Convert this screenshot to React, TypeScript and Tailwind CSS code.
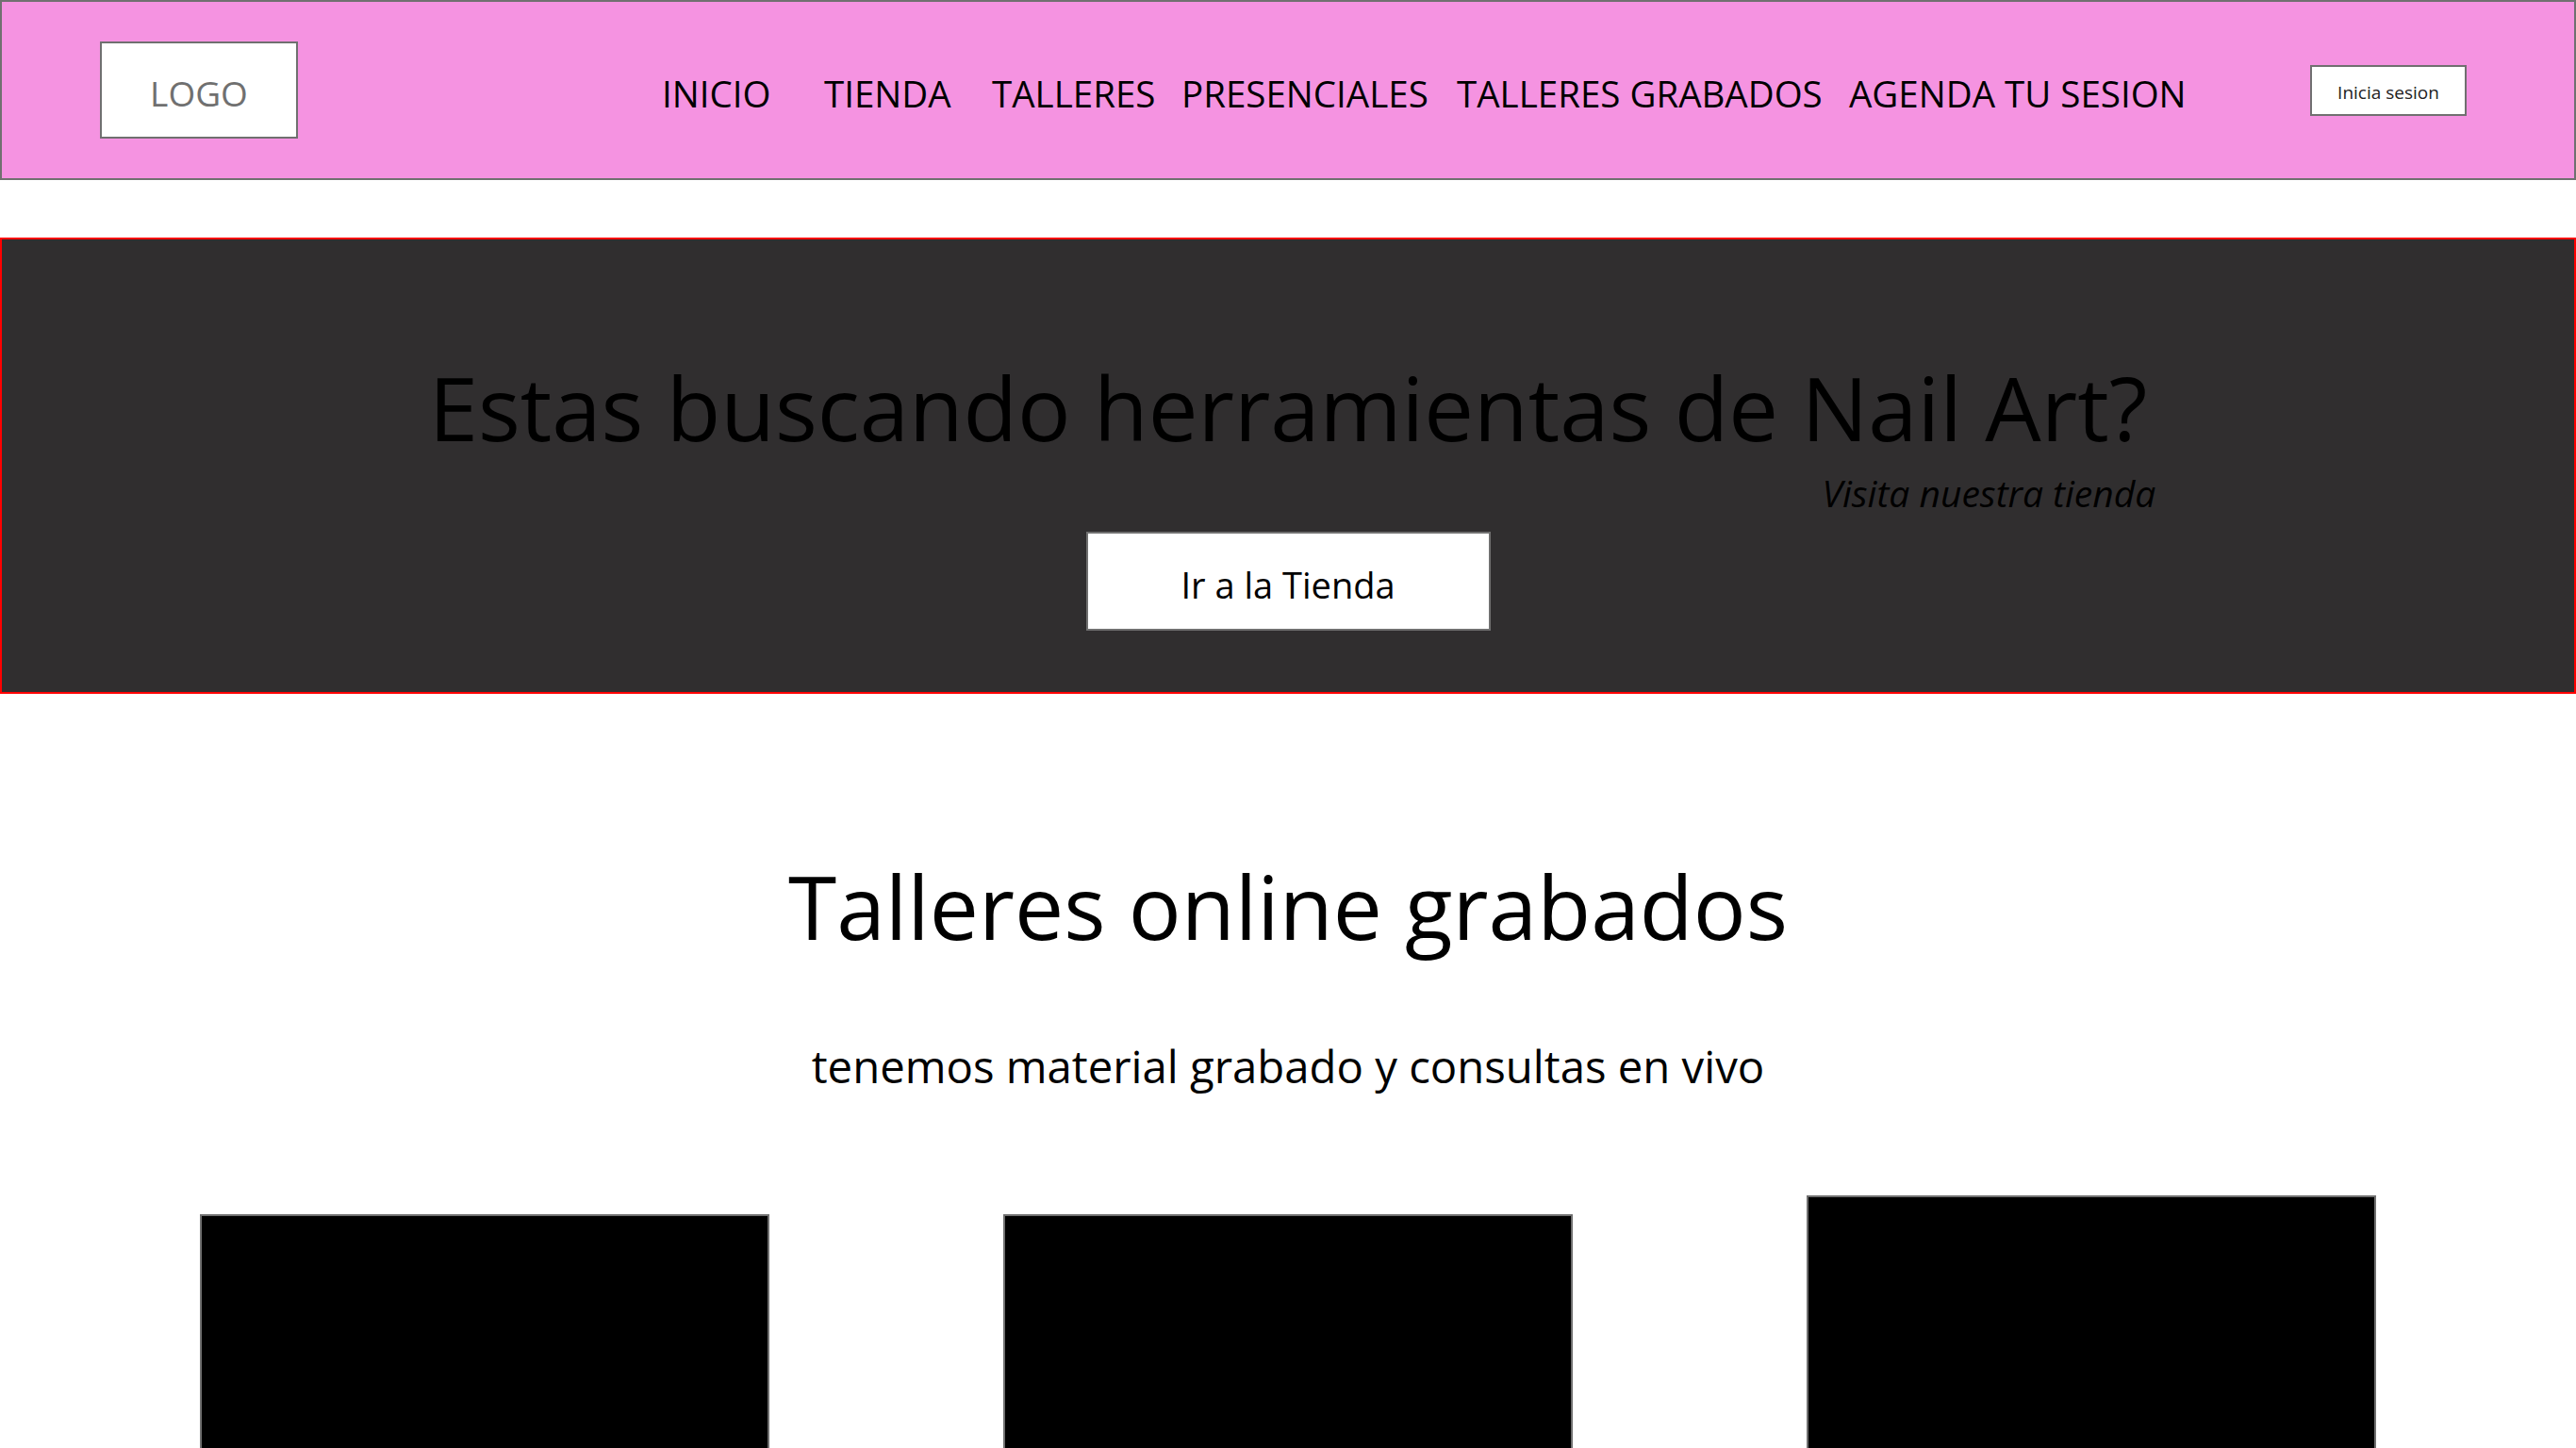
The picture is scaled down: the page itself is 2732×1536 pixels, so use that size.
const navItems = [
  { label: "INICIO", width: "w-[172px]" },
  { label: "TIENDA", width: "w-[178px]" },
  { label: "TALLERES", width: "w-[201px]" },
  { label: "PRESENCIALES", width: "w-[292px]" },
  { label: "TALLERES GRABADOS", width: "w-[416px]" },
  { label: "AGENDA TU SESION", width: "w-auto" },
];

const cards = [
  { id: 1, offset: "mt-[20px]" },
  { id: 2, offset: "mt-[20px]" },
  { id: 3, offset: "mt-0" },
];

export default function App() {
  return (
    <div className="min-h-screen w-[2732px] bg-white font-['Open_Sans',sans-serif] text-black overflow-hidden">
      {/* Header */}
      <header className="flex h-[191px] items-center border-2 border-[#707070] bg-[#f593e1] pl-[104px] pr-[114px]">
        <div className="flex h-[103px] w-[210px] items-center justify-center border-2 border-[#707070] bg-white pt-[6px] text-[37px] text-[#707070]">
          LOGO
        </div>
        <nav className="ml-[386px] mt-[8px] flex items-center">
          {navItems.map((item) => (
            <a key={item.label} href="#" className={`${item.width} whitespace-nowrap text-[38.5px] leading-none`}>
              {item.label}
            </a>
          ))}
        </nav>
        <button className="ml-auto flex h-[54px] w-[166px] items-center justify-center border-2 border-[#707070] bg-white pt-[5px] text-[19px] text-[#222]">
          Inicia sesion
        </button>
      </header>

      {/* Hero */}
      <section className="mt-[61px] flex h-[484px] flex-col items-center border-2 border-[#ff0000] bg-[#302e2f] pt-[131px]">
        <div className="flex flex-col">
          <h1 className="text-[94px] leading-none whitespace-nowrap">Estas buscando herramientas de Nail Art?</h1>
          <p className="mt-[24px] -mr-[9px] self-end text-right text-[39px] leading-none italic">Visita nuestra tienda</p>
        </div>
        <button className="mt-[22px] flex h-[105px] w-[429px] items-center justify-center border-2 border-[#707070] bg-white pt-[8px] text-[38px]">
          Ir a la Tienda
        </button>
      </section>

      {/* Talleres */}
      <section className="flex flex-col items-center pt-[179px]">
        <h2 className="text-[93px] leading-none whitespace-nowrap">Talleres online grabados</h2>
        <p className="mt-[99px] text-[47.3px] leading-none whitespace-nowrap">tenemos material grabado y consultas en vivo</p>
        <div className="mt-[114px] flex w-full items-start justify-between px-[212px]">
          {cards.map((card) => (
            <div key={card.id} className={`${card.offset} h-[420px] w-[604px] border-2 border-[#707070] bg-black`} />
          ))}
        </div>
      </section>
    </div>
  );
}
